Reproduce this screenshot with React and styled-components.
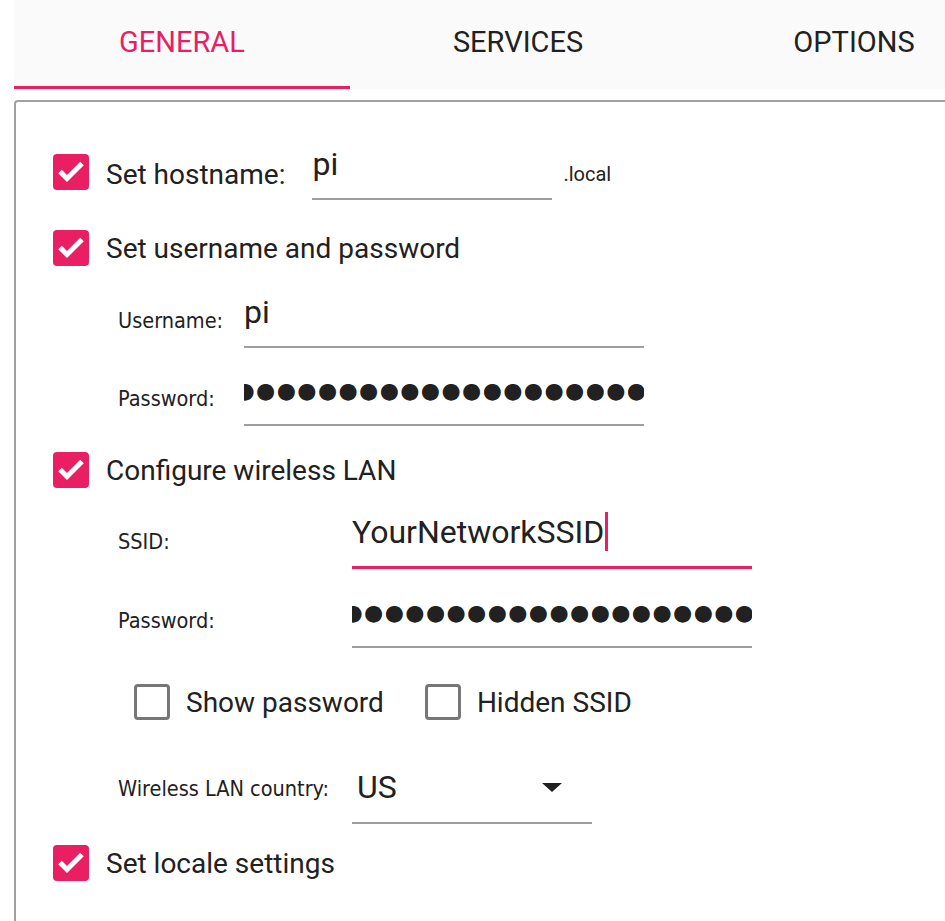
import React from 'react';
import styled, { createGlobalStyle } from 'styled-components';

const pink = '#e91e63';
const ink = '#212121';

const Global = createGlobalStyle`
  html, body {
    margin: 0;
    background: #fff;
    overflow: hidden;
  }
  body {
    font-family: Roboto, "Liberation Sans", sans-serif;
    color: ${ink};
  }
`;

const Page = styled.div`
  width: 945px;
  height: 921px;
  padding-left: 14px;
  box-sizing: border-box;
  overflow: hidden;
`;

const TabBar = styled.div`
  display: flex;
  height: 89px;
  background: #fafafa;
`;

const Tab = styled.div`
  flex: 0 0 336px;
  display: flex;
  align-items: center;
  justify-content: center;
  box-sizing: border-box;
  padding-bottom: 2px;
  font-size: 29px;
  color: ${p => (p.$active ? pink : ink)};
  border-bottom: 3px solid ${p => (p.$active ? pink : 'transparent')};
`;

const Panel = styled.div`
  margin-top: 11px;
  width: 1000px;
  height: 830px;
  border: 2px solid #a0a0a0;
  border-bottom: none;
  border-top-left-radius: 4px;
  box-sizing: border-box;
  padding: 46px 0 0 37px;
`;

const Row = styled.div`
  display: flex;
  align-items: center;
  height: ${p => p.$h || 36}px;
  margin-top: ${p => p.$mt || 0}px;
  padding-left: ${p => p.$indent || 0}px;
`;

const Box = styled.span`
  flex: 0 0 auto;
  width: 36px;
  height: 36px;
  border-radius: 4px;
  box-sizing: border-box;
  background: ${p => (p.$on ? pink : '#fff')};
  border: ${p => (p.$on ? 'none' : '3px solid #777')};
  display: flex;
  align-items: center;
  justify-content: center;
  margin-bottom: ${p => p.$mb || 0}px;
`;

const CheckLabel = styled.span`
  margin-left: ${p => p.$gap || 17}px;
  margin-right: ${p => p.$after || 0}px;
  font-size: 28px;
  white-space: nowrap;
`;

const FieldLabel = styled.span`
  flex: 0 0 ${p => p.$w}px;
  padding-bottom: 4px;
  font-family: "DejaVu Sans Condensed", "DejaVu Sans", sans-serif;
  font-stretch: condensed;
  font-size: 21.5px;
  white-space: nowrap;
`;

const Input = styled.div`
  width: ${p => p.$w}px;
  height: 52px;
  box-sizing: border-box;
  display: flex;
  align-items: flex-end;
  padding-bottom: 15px;
  border-bottom: ${p => (p.$focus ? `3px solid ${pink}` : '2px solid #9e9e9e')};
  font-size: 32px;
  white-space: nowrap;
  overflow: ${p => (p.$clip ? 'hidden' : 'visible')};
  align-self: flex-end;
`;

const Caret = styled.span`
  display: inline-block;
  width: 3px;
  height: 39px;
  background: ${pink};
  vertical-align: -9px;
  margin-left: 1px;
`;

const Dots = styled.span`
  display: block;
  align-self: flex-start;
  margin-left: -8.5px;
  font-family: "DejaVu Sans", sans-serif;
  font-size: 22px;
  line-height: 34px;
  letter-spacing: 1.4px;
  color: ${ink};
`;

const Suffix = styled.span`
  margin-left: 11px;
  font-size: 20px;
`;

const Select = styled.div`
  width: 240px;
  height: 68px;
  box-sizing: border-box;
  border-bottom: 2px solid #9e9e9e;
  display: flex;
  align-items: center;
  justify-content: space-between;
  padding: 0 30px 4px 5px;
  font-size: 32px;
`;

const Arrow = styled.span`
  width: 0;
  height: 0;
  border-left: 10px solid transparent;
  border-right: 10px solid transparent;
  border-top: 9px solid ${ink};
`;

function Check({ on, mb }) {
  return (
    <Box $on={on} $mb={mb}>
      {on && (
        <svg width="36" height="36" viewBox="0 0 36 36">
          <polyline points="7,17.5 14,24.5 29,9.5" fill="none" stroke="#fff" strokeWidth="5" />
        </svg>
      )}
    </Box>
  );
}

const dots = '●'.repeat(23);

export default function App() {
  return (
    <Page>
      <Global />
      <TabBar>
        <Tab $active>GENERAL</Tab>
        <Tab>SERVICES</Tab>
        <Tab>OPTIONS</Tab>
      </TabBar>
      <Panel>
        <Row $h={52}>
          <Check on mb={4} />
          <CheckLabel $after={27}>Set hostname:</CheckLabel>
          <Input $w={240}>pi</Input>
          <Suffix>.local</Suffix>
        </Row>

        <Row $mt={30}>
          <Check on />
          <CheckLabel>Set username and password</CheckLabel>
        </Row>
        <Row $h={52} $mt={30} $indent={65}>
          <FieldLabel $w={126}>Username:</FieldLabel>
          <Input $w={400}>pi</Input>
        </Row>
        <Row $h={52} $mt={26} $indent={65}>
          <FieldLabel $w={126}>Password:</FieldLabel>
          <Input $w={400} $clip><Dots>{dots}</Dots></Input>
        </Row>

        <Row $mt={26}>
          <Check on />
          <CheckLabel>Configure wireless LAN</CheckLabel>
        </Row>
        <Row $h={52} $mt={29} $indent={65}>
          <FieldLabel $w={234}>SSID:</FieldLabel>
          <Input $w={400} $focus>YourNetworkSSID<Caret /></Input>
        </Row>
        <Row $h={52} $mt={27} $indent={65}>
          <FieldLabel $w={234}>Password:</FieldLabel>
          <Input $w={400} $clip><Dots>{dots}</Dots></Input>
        </Row>
        <Row $mt={36} $indent={81}>
          <Check />
          <CheckLabel $gap={16} $after={41}>Show password</CheckLabel>
          <Check />
          <CheckLabel $gap={16}>Hidden SSID</CheckLabel>
        </Row>
        <Row $h={68} $mt={36} $indent={65}>
          <FieldLabel $w={234}>Wireless LAN country:</FieldLabel>
          <Select>
            <span>US</span>
            <Arrow />
          </Select>
        </Row>

        <Row $mt={21}>
          <Check on />
          <CheckLabel>Set locale settings</CheckLabel>
        </Row>
      </Panel>
    </Page>
  );
}
